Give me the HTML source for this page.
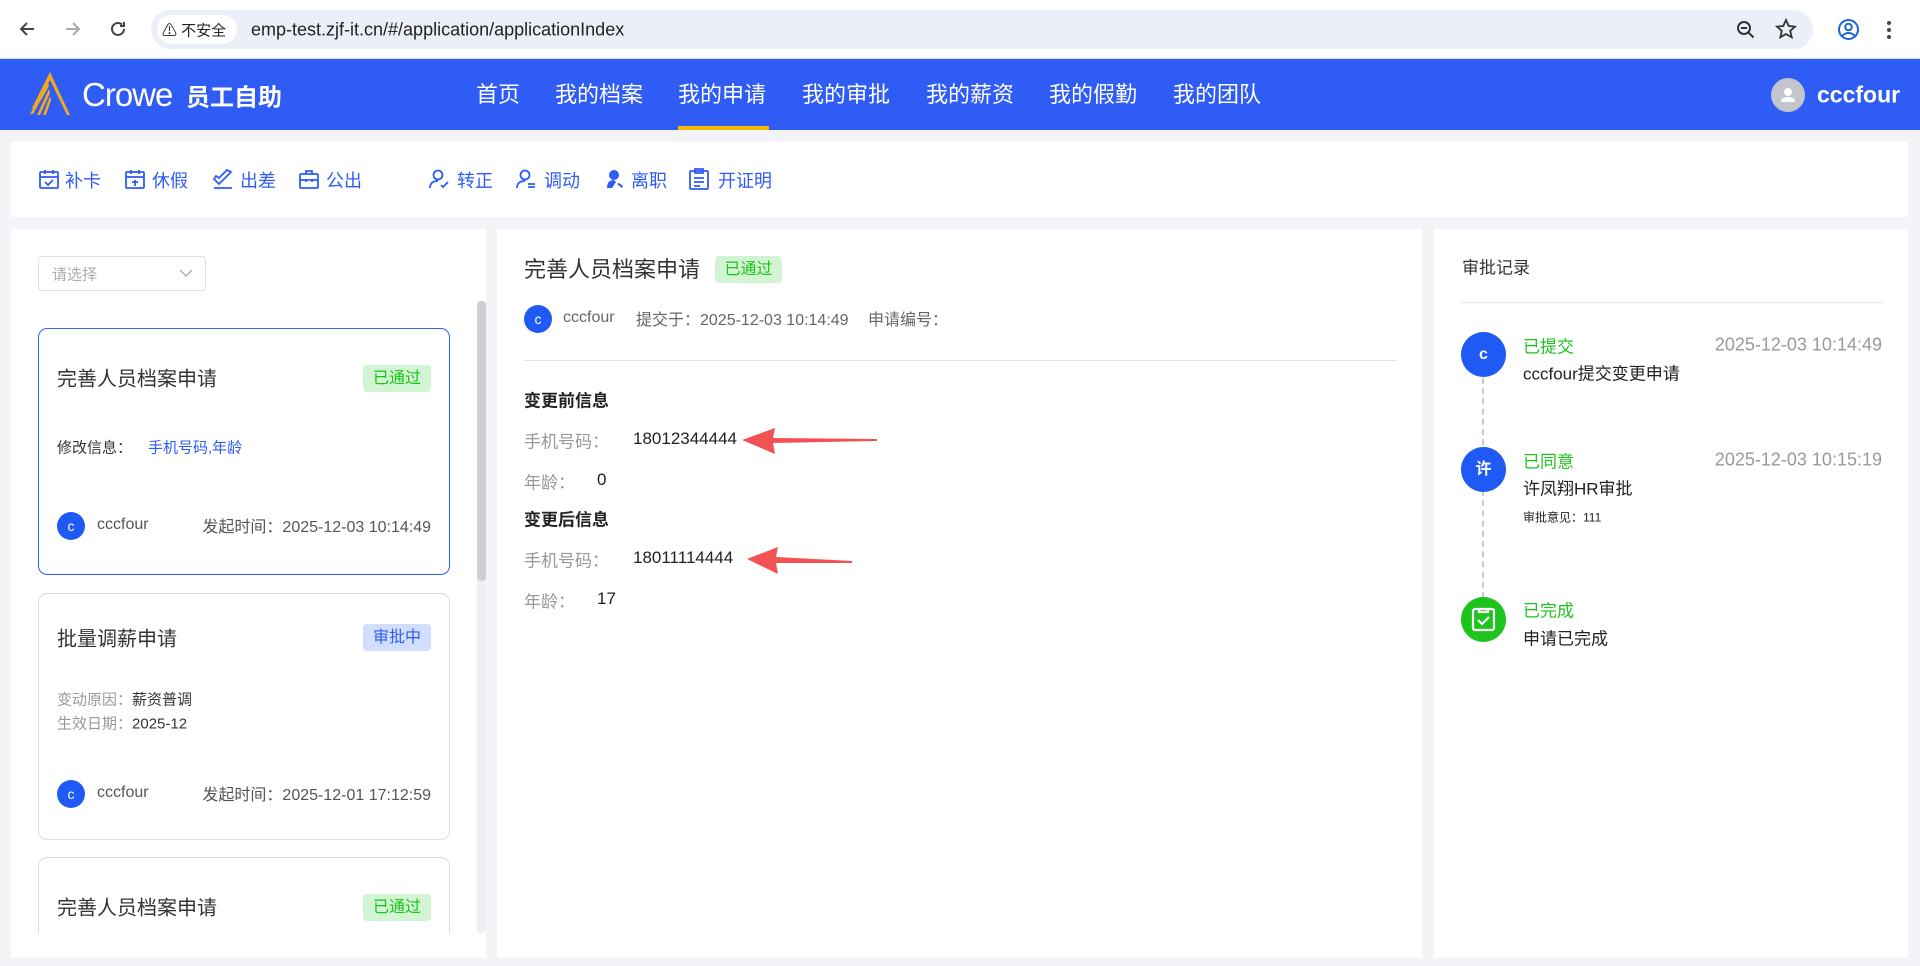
<!DOCTYPE html>
<html><head><meta charset="utf-8"><style>
*{margin:0;padding:0;box-sizing:border-box}
body{width:1920px;height:966px;overflow:hidden;background:#f3f4f8;font-family:"Liberation Sans","Noto Sans CJK SC",sans-serif;position:relative;color:#333}
.a{position:absolute;white-space:nowrap}
.cy{transform:translateY(-50%)}
.bar{left:0;top:0;width:1920px;height:59px;background:#fff;border-bottom:1px solid #ddd}
.pill{left:151px;top:10px;width:1662px;height:39px;border-radius:20px;background:#ebf0f8}
.hdr{left:0;top:59px;width:1920px;height:71px;background:#305cf6}
.nav{top:93px;font-size:22px;color:#fff;transform:translateY(-50%)}
.box{background:#fff}
.tb{top:180px;font-size:18px;color:#2f5bf6;transform:translateY(-50%)}
.card{position:absolute;left:38px;width:412px;border:1px solid #dcdde2;border-radius:9px;background:#fff;overflow:hidden}
.badge{position:absolute;height:27px;line-height:27px;font-size:16px;padding:0 10px;border-radius:4px}
.g{background:#d3f4d3;color:#18c418}
.b{background:#d2defd;color:#2f5bf6}
.av{position:absolute;width:28px;height:28px;border-radius:50%;background:#1f5af5;color:#fff;font-size:14px;text-align:center;line-height:28px}
</style></head><body>
<div class="a bar"></div>
<svg class="a" style="left:17px;top:19px" width="20" height="20" viewBox="0 0 20 20"><path d="M17 10H4M10 4l-6 6 6 6" fill="none" stroke="#444" stroke-width="2"/></svg>
<svg class="a" style="left:63px;top:19px" width="20" height="20" viewBox="0 0 20 20"><path d="M3 10h13M10 4l6 6-6 6" fill="none" stroke="#aaa" stroke-width="2"/></svg>
<svg class="a" style="left:108px;top:19px" width="20" height="20" viewBox="0 0 20 20"><path d="M16 10a6 6 0 1 1-2-4.5M16 3v4h-4" fill="none" stroke="#444" stroke-width="2"/></svg>
<div class="a pill"></div>
<div class="a" style="left:157px;top:15px;width:80px;height:29px;border-radius:15px;background:#fff"></div>
<div class="a cy" style="left:162px;top:30px;font-size:15px;color:#222">⚠ 不安全</div>
<div class="a cy" style="left:251px;top:30px;font-size:18px;color:#222">emp-test.zjf-it.cn/#/application/applicationIndex</div>
<svg class="a" style="left:1735px;top:19px" width="22" height="22" viewBox="0 0 22 22"><circle cx="9" cy="9" r="6" fill="none" stroke="#333" stroke-width="2"/><path d="M6 9h6M13.5 13.5l5 5" stroke="#333" stroke-width="2"/></svg>
<svg class="a" style="left:1775px;top:18px" width="22" height="22" viewBox="0 0 22 22"><path d="M11 2l2.7 6 6.3.6-4.8 4.3 1.5 6.4L11 16l-5.7 3.3 1.5-6.4L2 8.6 8.3 8z" fill="none" stroke="#333" stroke-width="1.8"/></svg>
<svg class="a" style="left:1837px;top:18px" width="23" height="23" viewBox="0 0 23 23"><circle cx="11.5" cy="11.5" r="9.5" fill="none" stroke="#1a66d2" stroke-width="2"/><circle cx="11.5" cy="9" r="3.3" fill="none" stroke="#1a66d2" stroke-width="2"/><path d="M5.5 17.5q6-5 12 0" fill="none" stroke="#1a66d2" stroke-width="2"/></svg>
<div class="a" style="left:1887px;top:21px;width:4px;height:4px;border-radius:2px;background:#444;box-shadow:0 7px 0 #444,0 14px 0 #444"></div>

<div class="a hdr"></div>
<svg class="a" style="left:28px;top:72px" width="46" height="44" viewBox="0 0 46 44"><path d="M22 0L4 36l2 1L22 8l17 35h3z" fill="#f2a81d"/><path d="M20 10L2 42l3 0L21 14zM21 17L9 43h3L22 21zM22 24l-7 19h3l5-15z" fill="#f2a81d"/></svg>
<div class="a cy" style="left:82px;top:95px;font-size:33px;color:#fff;font-weight:300;letter-spacing:-1px">Crowe</div>
<div class="a cy" style="left:186px;top:95px;font-size:24px;color:#fff;font-weight:bold">员工自助</div>
<div class="a nav" style="left:476px">首页</div>
<div class="a nav" style="left:555px">我的档案</div>
<div class="a nav" style="left:678px">我的申请</div>
<div class="a nav" style="left:802px">我的审批</div>
<div class="a nav" style="left:926px">我的薪资</div>
<div class="a nav" style="left:1049px">我的假勤</div>
<div class="a nav" style="left:1173px">我的团队</div>
<div class="a" style="left:678px;top:126px;width:91px;height:4px;background:#f5b800"></div>
<div class="a" style="left:1771px;top:78px;width:34px;height:34px;border-radius:50%;background:#c2c5cc"></div>
<svg class="a" style="left:1777px;top:84px" width="22" height="22" viewBox="0 0 22 22"><circle cx="11" cy="8" r="4" fill="#fff"/><path d="M4 18q0-5 7-5t7 5z" fill="#fff"/></svg>
<div class="a cy" style="left:1817px;top:95px;font-size:23px;color:#fff;font-weight:bold">cccfour</div>

<div class="a box" style="left:11px;top:142px;width:1897px;height:75px"></div>
<svg class="a" style="left:38px;top:168px" width="22" height="22" viewBox="0 0 22 22" fill="none" stroke="#2f5bf6" stroke-width="1.8"><rect x="2" y="4" width="18" height="16" rx="1"/><path d="M2 9h18M7 2v4M15 2v4M7 14l3 3 5-5"/></svg>
<div class="a tb" style="left:65px">补卡</div>
<svg class="a" style="left:124px;top:168px" width="22" height="22" viewBox="0 0 22 22" fill="none" stroke="#2f5bf6" stroke-width="1.8"><rect x="2" y="4" width="18" height="16" rx="1"/><path d="M2 9h18M7 2v4M15 2v4M8 14h6M11 12v6"/></svg>
<div class="a tb" style="left:152px">休假</div>
<svg class="a" style="left:211px;top:167px" width="24" height="24" viewBox="0 0 24 24" fill="none" stroke="#2f5bf6" stroke-width="1.8"><path d="M3 12l5 5 12-12-4-2-8 8-3-2zM3 21h18"/></svg>
<div class="a tb" style="left:240px">出差</div>
<svg class="a" style="left:298px;top:168px" width="22" height="22" viewBox="0 0 22 22" fill="none" stroke="#2f5bf6" stroke-width="1.8"><rect x="2" y="6" width="18" height="14" rx="1"/><path d="M8 6V3h6v3M2 12h18M8 11v3M14 11v3"/></svg>
<div class="a tb" style="left:326px">公出</div>
<svg class="a" style="left:428px;top:168px" width="22" height="22" viewBox="0 0 22 22" fill="none" stroke="#2f5bf6" stroke-width="1.8"><circle cx="10" cy="7" r="4.5"/><path d="M2 20q0-7 8-7M13 17l2 2 5-5"/></svg>
<div class="a tb" style="left:457px">转正</div>
<svg class="a" style="left:515px;top:168px" width="22" height="22" viewBox="0 0 22 22" fill="none" stroke="#2f5bf6" stroke-width="1.8"><circle cx="10" cy="7" r="4.5"/><path d="M2 20q0-7 8-7M13 16h7M13 19h7"/></svg>
<div class="a tb" style="left:544px">调动</div>
<svg class="a" style="left:604px;top:168px" width="22" height="22" viewBox="0 0 22 22" fill="#2f5bf6"><circle cx="10" cy="7" r="5"/><path d="M3 20q0-8 7-8l2 2-4 6zM13 16l5 4 1-2-4-3z"/></svg>
<div class="a tb" style="left:631px">离职</div>
<svg class="a" style="left:688px;top:167px" width="22" height="24" viewBox="0 0 22 24" fill="none" stroke="#2f5bf6" stroke-width="1.8"><rect x="2" y="4" width="18" height="18" rx="1"/><path d="M7 2h8v4H7zM6 11h10M6 15h10M6 19h6"/></svg>
<div class="a tb" style="left:718px">开证明</div>

<!-- left panel -->
<div class="a box" style="left:11px;top:229px;width:475px;height:729px"></div>
<div class="a" style="left:38px;top:256px;width:168px;height:35px;border:1px solid #dcdfe6;border-radius:4px"></div>
<div class="a cy" style="left:52px;top:274px;font-size:15px;color:#aaa">请选择</div>
<svg class="a" style="left:179px;top:268px" width="14" height="10" viewBox="0 0 14 10"><path d="M1 2l6 6 6-6" fill="none" stroke="#aaa" stroke-width="1.3"/></svg>
<div class="a" style="left:477px;top:301px;width:9px;height:632px;background:#f0f0f2;border-radius:4px"></div>
<div class="a" style="left:477px;top:301px;width:9px;height:280px;background:#cecfd2;border-radius:4px"></div>

<div class="card" style="top:328px;height:247px;border-color:#2a62f6">
<div class="a cy" style="left:18px;top:48px;font-size:20px;color:#333">完善人员档案申请</div>
<div class="badge g" style="left:324px;top:36px">已通过</div>
<div class="a cy" style="left:18px;top:118px;font-size:15px;color:#333">修改信息：</div>
<div class="a cy" style="left:109px;top:118px;font-size:15px;color:#2f5bf6">手机号码,年龄</div>
<div class="av" style="left:18px;top:183px">c</div>
<div class="a cy" style="left:58px;top:196px;font-size:16px;color:#555">cccfour</div>
<div class="a cy" style="right:18px;top:196px;font-size:16px;color:#555">发起时间：2025-12-03 10:14:49</div>
</div>

<div class="card" style="top:593px;height:247px">
<div class="a cy" style="left:18px;top:43px;font-size:20px;color:#333">批量调薪申请</div>
<div class="badge b" style="left:324px;top:30px">审批中</div>
<div class="a cy" style="left:18px;top:105px;font-size:15px;color:#999">变动原因：<span style="color:#333">薪资普调</span></div>
<div class="a cy" style="left:18px;top:129px;font-size:15px;color:#999">生效日期：<span style="color:#333">2025-12</span></div>
<div class="av" style="left:18px;top:186px">c</div>
<div class="a cy" style="left:58px;top:199px;font-size:16px;color:#555">cccfour</div>
<div class="a cy" style="right:18px;top:199px;font-size:16px;color:#555">发起时间：2025-12-01 17:12:59</div>
</div>

<div class="card" style="top:857px;height:76px;border-bottom:none;border-radius:9px 9px 0 0">
<div class="a cy" style="left:18px;top:48px;font-size:20px;color:#333">完善人员档案申请</div>
<div class="badge g" style="left:324px;top:36px">已通过</div>
</div>

<!-- middle -->
<div class="a box" style="left:497px;top:229px;width:925px;height:729px"></div>
<div class="a cy" style="left:524px;top:268px;font-size:22px;color:#333">完善人员档案申请</div>
<div class="badge g" style="left:715px;top:256px;width:67px;padding:0;text-align:center">已通过</div>
<div class="av" style="left:524px;top:305px">c</div>
<div class="a cy" style="left:563px;top:318px;font-size:16px;color:#666">cccfour</div>
<div class="a cy" style="left:636px;top:318px;font-size:16px;color:#666">提交于：2025-12-03 10:14:49</div>
<div class="a cy" style="left:868px;top:318px;font-size:16px;color:#666">申请编号：</div>
<div class="a" style="left:524px;top:360px;width:873px;height:1px;background:#e3e4e9"></div>
<div class="a cy" style="left:524px;top:399px;font-size:17px;font-weight:bold;color:#222">变更前信息</div>
<div class="a cy" style="left:524px;top:440px;font-size:17px;color:#999">手机号码：</div>
<div class="a cy" style="left:633px;top:439px;font-size:17px;color:#222">18012344444</div>
<div class="a cy" style="left:524px;top:481px;font-size:17px;color:#999">年龄：</div>
<div class="a cy" style="left:597px;top:480px;font-size:17px;color:#222">0</div>
<div class="a cy" style="left:524px;top:518px;font-size:17px;font-weight:bold;color:#222">变更后信息</div>
<div class="a cy" style="left:524px;top:559px;font-size:17px;color:#999">手机号码：</div>
<div class="a cy" style="left:633px;top:558px;font-size:17px;color:#222">18011114444</div>
<div class="a cy" style="left:524px;top:600px;font-size:17px;color:#999">年龄：</div>
<div class="a cy" style="left:597px;top:599px;font-size:17px;color:#222">17</div>
<svg class="a" style="left:738px;top:426px" width="145" height="30" viewBox="0 0 145 30"><path d="M4 14L37 2l-2 10 104 1v2L35 17l2 11z" fill="#f25254"/></svg>
<svg class="a" style="left:743px;top:545px" width="115" height="30" viewBox="0 0 115 30"><path d="M4 14L35 2l-2 10 76 4v2L33 18l2 11z" fill="#f25254"/></svg>

<!-- right -->
<div class="a box" style="left:1434px;top:229px;width:474px;height:729px"></div>
<div class="a cy" style="left:1462px;top:266px;font-size:17px;color:#333">审批记录</div>
<div class="a" style="left:1461px;top:302px;width:421px;height:1px;background:#e3e4e9"></div>
<div class="a" style="left:1482px;top:378px;width:0;height:220px;border-left:2px dashed #ccc"></div>
<div class="a" style="left:1461px;top:332px;width:45px;height:45px;border-radius:50%;background:#1f5af5;color:#fff;font-weight:bold;font-size:16px;text-align:center;line-height:45px">c</div>
<div class="a" style="left:1461px;top:447px;width:45px;height:45px;border-radius:50%;background:#1f5af5;color:#fff;font-weight:bold;font-size:16px;text-align:center;line-height:45px">许</div>
<div class="a" style="left:1461px;top:597px;width:45px;height:45px;border-radius:50%;background:#1dc41d"></div>
<svg class="a" style="left:1470px;top:606px" width="27" height="27" viewBox="0 0 27 27" fill="none" stroke="#fff" stroke-width="2.2"><rect x="3" y="3" width="21" height="21" rx="2"/><path d="M9 3v3h9V3M8 14l4 4 7-7"/></svg>
<div class="a cy" style="left:1523px;top:345px;font-size:17px;color:#1ec51e">已提交</div>
<div class="a cy" style="right:38px;top:345px;font-size:18px;color:#999">2025-12-03 10:14:49</div>
<div class="a cy" style="left:1523px;top:372px;font-size:17px;color:#222">cccfour提交变更申请</div>
<div class="a cy" style="left:1523px;top:460px;font-size:17px;color:#1ec51e">已同意</div>
<div class="a cy" style="right:38px;top:460px;font-size:18px;color:#999">2025-12-03 10:15:19</div>
<div class="a cy" style="left:1523px;top:487px;font-size:17px;color:#222">许凤翔HR审批</div>
<div class="a cy" style="left:1523px;top:517px;font-size:12px;color:#222">审批意见：111</div>
<div class="a cy" style="left:1523px;top:609px;font-size:17px;color:#1ec51e">已完成</div>
<div class="a cy" style="left:1523px;top:637px;font-size:17px;color:#222">申请已完成</div>
</body></html>
